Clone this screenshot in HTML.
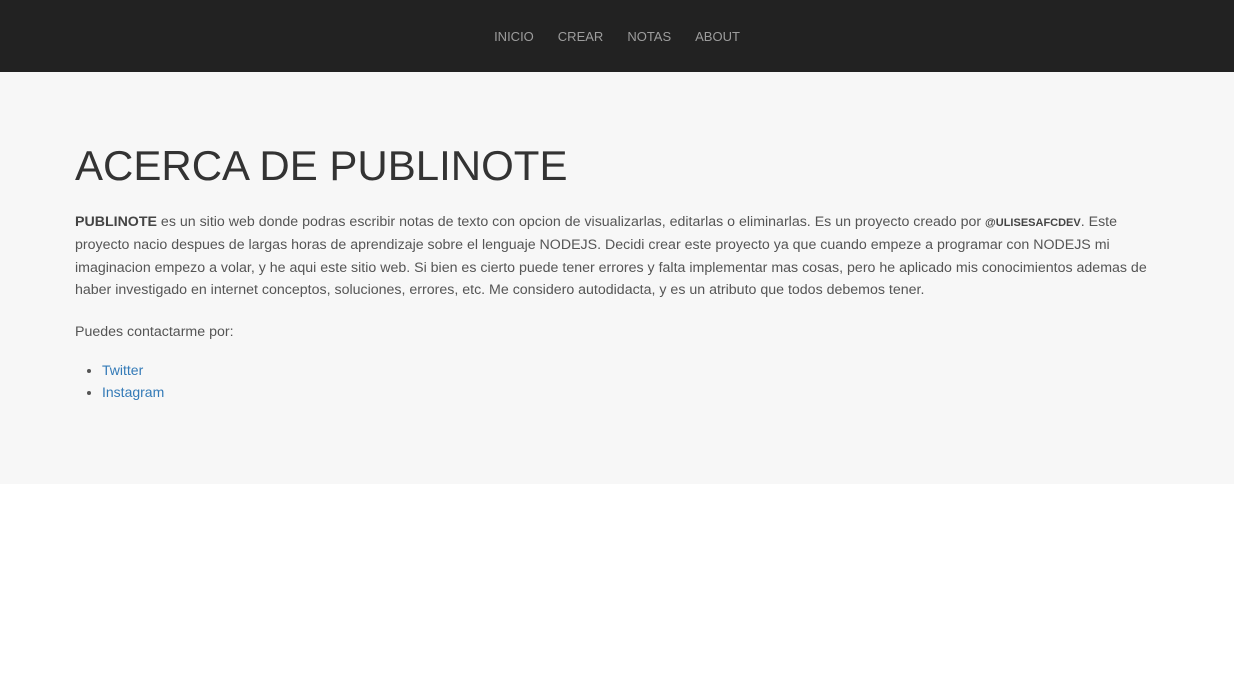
<!DOCTYPE html>
<html><head><meta charset="utf-8"><style>
*{margin:0;padding:0;box-sizing:border-box}
body{width:1234px;height:692px;background:#fff;font-family:"Liberation Sans",sans-serif;overflow:hidden}
nav{height:72px;background:#222;text-align:center;padding-top:29px;font-size:13px;color:#9d9d9d}
nav span{margin:0 12px}
.jumbo{background:#f7f7f7;height:412px;padding:0 75px;color:#555}
h1{font-weight:normal;font-size:42px;color:#333;padding-top:70px;line-height:48px;white-space:nowrap}
p{font-size:14.2px;line-height:22.3px;white-space:nowrap;margin-top:21px}
p b{color:#444}
ul{margin-left:27px;font-size:14px;line-height:22px}
a{color:#337ab7;text-decoration:none}
</style></head><body>
<nav><span>INICIO</span><span>CREAR</span><span>NOTAS</span><span>ABOUT</span></nav>
<div class="jumbo">
<h1>ACERCA DE PUBLINOTE</h1>
<p><b>PUBLINOTE</b> es un sitio web donde podras escribir notas de texto con opcion de visualizarlas, editarlas o eliminarlas. Es un proyecto creado por <b style="font-size:11px">@ULISESAFCDEV</b>. Este<br>proyecto nacio despues de largas horas de aprendizaje sobre el lenguaje NODEJS. Decidi crear este proyecto ya que cuando empeze a programar con NODEJS mi<br>imaginacion empezo a volar, y he aqui este sitio web. Si bien es cierto puede tener errores y falta implementar mas cosas, pero he aplicado mis conocimientos ademas de<br>haber investigado en internet conceptos, soluciones, errores, etc. Me considero autodidacta, y es un atributo que todos debemos tener.</p>
<p style="margin-top:20px">Puedes contactarme por:</p>
<ul style="margin-top:16px"><li><a>Twitter</a></li><li><a>Instagram</a></li></ul>
</div>
</body></html>
